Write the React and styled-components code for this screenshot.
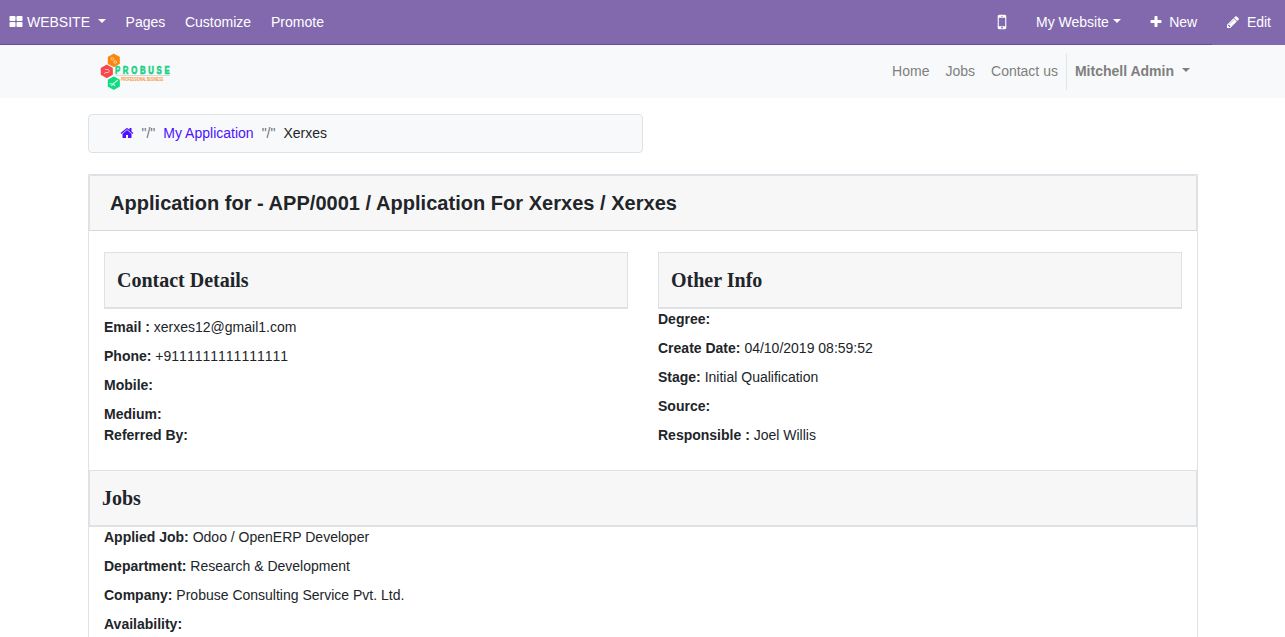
import React from "react";
import styled, { createGlobalStyle } from "styled-components";

const GlobalStyle = createGlobalStyle`
  *, *::before, *::after { box-sizing: border-box; }
  html, body { margin: 0; height: 100%; overflow: hidden; }
  body {
    background: #fff;
    color: #212529;
    font: 14px/21px "Liberation Sans", Arial, sans-serif;
  }
  h3, h4, p { margin: 0; }
`;

const Page = styled.div`
  height: 637px;
  overflow: hidden;
`;

const TopBar = styled.header`
  display: flex;
  justify-content: space-between;
  height: 45px;
  background: #8269ad;
  color: #fff;
`;

const Menu = styled.nav`
  display: flex;
  border-bottom: 1px solid #6c4a9c;
  flex: ${(p) => (p.$grow ? 1 : "none")};
`;

const MenuItem = styled.a`
  display: flex;
  align-items: center;
  height: 44px;
  padding: 0 ${(p) => p.$right ?? 10}px 0 ${(p) => p.$left ?? 10}px;
  gap: ${(p) => p.$gap ?? 0}px;
  white-space: nowrap;
`;

const EditButton = styled(MenuItem)`
  height: 45px;
  padding-bottom: 1px;
  background: #8269ad;
`;

const Caret = styled.span`
  border: 4.2px solid transparent;
  border-top-color: currentColor;
  border-bottom: 0;
  margin-left: ${(p) => p.$gap}px;
  margin-bottom: ${(p) => p.$lift ?? 2}px;
`;

const Glyph = styled.svg`
  display: block;
  flex: none;
  width: ${(p) => p.$size}px;
  height: ${(p) => p.$size}px;
  fill: currentColor;
`;

const LogoImage = styled.svg`
  display: block;
  flex: none;
  width: 80px;
  height: 38px;
  overflow: visible;
`;

const SiteHeader = styled.div`
  height: 53px;
  background: #f8f9fa;
`;

const Container = styled.div`
  width: 1110px;
  margin-left: 88px;
`;

const HeaderRow = styled(Container)`
  display: flex;
  align-items: center;
  justify-content: space-between;
  height: 53px;
  padding-left: 12px;
`;

const SiteNav = styled.nav`
  display: flex;
  align-items: center;
  color: #7f7f80;
`;

const SiteLink = styled.a`
  padding: 0 8px;
  white-space: nowrap;
`;

const UserMenu = styled.a`
  display: flex;
  align-items: center;
  height: 37px;
  padding: 0 8px;
  border-left: 1px solid #e3e5e8;
  font-weight: bold;
`;

const Breadcrumb = styled.div`
  display: flex;
  align-items: center;
  width: 555px;
  height: 39px;
  margin: 16px 0 21px;
  padding-left: 30.5px;
  gap: 8px;
  background: #f8f9fa;
  border: 1px solid #dee2e6;
  border-radius: 4px;
`;

const CrumbLink = styled.a`
  padding-bottom: ${(p) => (p.$icon ? 1 : 0)}px;
  color: #4c12ff;
`;

const Separator = styled.span`
  color: #6c757d;
`;

const Card = styled.main`
  height: 520px;
  border: 1px solid #dee2e6;
`;

const CardHeader = styled.div`
  height: 56px;
  padding: 15px 20px;
  background: #f7f7f7;
  border: 1px solid #dee2e6;
  border-bottom-color: #d5d7da;
  border-radius: 2px 2px 0 0;
`;

const CardTitle = styled.h3`
  font-size: 20px;
  line-height: 24px;
  letter-spacing: 0.027px;
`;

const Columns = styled.div`
  display: grid;
  grid-template-columns: 1fr 1fr;
  gap: 30px;
  height: 239px;
  padding: 21px 15px 0;
`;

const SectionHeader = styled.div`
  height: 57px;
  padding: 15px 12px;
  background: #f7f7f7;
  border: 1px solid #dee2e6;
  border-bottom-width: 2px;
`;

const SectionTitle = styled.h4`
  font: bold 20px/25px "Liberation Serif", "Times New Roman", serif;
`;

const Fields = styled.div`
  padding: ${(p) => p.$top ?? 0}px ${(p) => p.$side ?? 0}px 0;
`;

const Field = styled.p`
  margin-bottom: ${(p) => (p.$tight ? 0 : 8)}px;
  white-space: nowrap;
  font-kerning: ${(p) => (p.$digits ? "none" : "auto")};
`;

const icons = {
  blocks:
    "M832 1024v384q0 52-38 90t-90 38h-512q-52 0-90-38t-38-90v-384q0-52 38-90t90-38h512q52 0 90 38t38 90zm0-768v384q0 52-38 90t-90 38h-512q-52 0-90-38t-38-90v-384q0-52 38-90t90-38h512q52 0 90 38t38 90zm896 768v384q0 52-38 90t-90 38h-512q-52 0-90-38t-38-90v-384q0-52 38-90t90-38h512q52 0 90 38t38 90zm0-768v384q0 52-38 90t-90 38h-512q-52 0-90-38t-38-90v-384q0-52 38-90t90-38h512q52 0 90 38t38 90z",
  plus: "M1600 736v192q0 40-28 68t-68 28h-416v416q0 40-28 68t-68 28h-192q-40 0-68-28t-28-68v-416h-416q-40 0-68-28t-28-68v-192q0-40 28-68t68-28h416v-416q0-40 28-68t68-28h192q40 0 68 28t28 68v416h416q40 0 68 28t28 68z",
  pencil:
    "M491 1536l91-91-235-235-91 91v107h128v128h107zm523-928q0-22-22-22-10 0-17 7l-542 542q-7 7-7 17 0 22 22 22 10 0 17-7l542-542q7-7 7-17zm-54-192l416 416-832 832h-416v-416zm683 96q0 53-37 90l-166 166-416-416 166-165q36-38 90-38 53 0 91 38l235 234q37 39 37 91z",
  home: "M1472 992v480q0 26-19 45t-45 19h-384v-384h-256v384h-384q-26 0-45-19t-19-45v-480q0-1 .5-3t.5-3l575-474 575 474q1 2 1 6zm223-69l-62 74q-8 9-21 11h-3q-13 0-21-7l-692-577-692 577q-12 8-24 7-13-2-21-11l-62-74q-8-10-7-23.5t11-21.5l719-599q32-26 76-26t76 26l244 204v-195q0-14 9-23t23-9h192q14 0 23 9t9 23v408l219 182q10 8 11 21.5t-7 23.5z",
  mobile:
    "M976 1408q0-33-23.5-56.5t-56.5-23.5-56.5 23.5-23.5 56.5 23.5 56.5 56.5 23.5 56.5-23.5 23.5-56.5zm208-160v-704q0-13-9.5-22.5t-22.5-9.5h-512q-13 0-22.5 9.500t-9.500 22.500v704q0 13 9.500 22.500t22.500 9.500h512q13 0 22.500-9.500t9.500-22.500zm-192-848q0-16-16-16h-160q-16 0-16 16t16 16h160q16 0 16-16zm288-16v1024q0 52-38 90t-90 38h-512q-52 0-90-38t-38-90v-1024q0-52 38-90t90-38h512q52 0 90 38t38 90z",
};

const Icon = ({ name, size = 14 }) => (
  <Glyph $size={size} viewBox="0 0 1792 1792">
    <path d={icons[name]} />
  </Glyph>
);

const Logo = () => (
  <LogoImage viewBox="0 0 80 38">
    <g strokeLinejoin="round" strokeWidth="1.2">
      <path d="M13.8 1.2l5.4 3v6.2l-5.4 3-5.4-3V4.2z" fill="#fb860b" stroke="#fb860b" />
      <path d="M6.8 12.2l5.4 3v6.2l-5.4 3-5.4-3v-6.2z" fill="#f8484c" stroke="#f8484c" />
      <path d="M13.8 24l5.4 3v6.2l-5.4 3-5.4-3V27z" fill="#0edc83" stroke="#0edc83" />
    </g>
    <g fill="none" stroke="#fff" strokeWidth=".8" opacity=".75">
      <circle cx="12.4" cy="5.8" r="1.3" />
      <circle cx="15.3" cy="9" r="1.3" />
      <path d="M5 16.500h3.500q1.500 1.500 0 3H6M4 21l2-2" />
      <path d="M9.500 31l4-.5 4.500-3.500M11 32.500l3-1 1 1.500" strokeWidth="1.2" />
    </g>
    <rect x="16" y="22" width="54" height="1" fill="#d5d9dc" />
    <text transform="translate(15 21) scale(.78 1)" textLength="70" lengthAdjust="spacing" fill="#18d184" stroke="#18d184" strokeWidth=".6" fontFamily="Liberation Sans" fontWeight="bold" fontSize="10">
      PROBUSE
    </text>
    <text transform="translate(21 27.600) scale(.72 1)" fill="#fb8f2c" stroke="#fb8f2c" strokeWidth=".15" fontFamily="Liberation Sans" fontSize="4.500">
      PROFESSIONAL BUSINESS
    </text>
  </LogoImage>
);

const contact = [
  { label: "Email :", value: "xerxes12@gmail1.com" },
  { label: "Phone:", value: "+9111111111111111", digits: true },
  { label: "Mobile:" },
  { label: "Medium:", tight: true },
  { label: "Referred By:" },
];
const other = [
  { label: "Degree:" },
  { label: "Create Date:", value: "04/10/2019 08:59:52" },
  { label: "Stage:", value: "Initial Qualification" },
  { label: "Source:" },
  { label: "Responsible :", value: "Joel Willis" },
];
const jobs = [
  { label: "Applied Job:", value: "Odoo / OpenERP Developer" },
  { label: "Department:", value: "Research & Development" },
  { label: "Company:", value: "Probuse Consulting Service Pvt. Ltd." },
  { label: "Availability:" },
];

const FieldList = ({ items, top, side }) => (
  <Fields $top={top} $side={side}>
    {items.map(({ label, value, tight, digits }) => (
      <Field key={label} $tight={tight} $digits={digits}>
        <b>{label}</b> {value}
      </Field>
    ))}
  </Fields>
);

const Section = ({ title }) => (
  <SectionHeader>
    <SectionTitle>{title}</SectionTitle>
  </SectionHeader>
);

export default function App() {
  return (
    <Page>
      <GlobalStyle />
      <TopBar>
        <Menu $grow>
          <MenuItem $left={9.4} $gap={3.6}>
            <Icon name="blocks" />
            <span>WEBSITE</span>
            <Caret $gap={4} />
          </MenuItem>
          <MenuItem>Pages</MenuItem>
          <MenuItem $left={9.6}>Customize</MenuItem>
          <MenuItem>Promote</MenuItem>
        </Menu>
        <Menu>
          <MenuItem $right={14}>
            <Icon name="mobile" size={20} />
          </MenuItem>
          <MenuItem $right={14.7}>
            My Website
            <Caret $gap={3.6} />
          </MenuItem>
          <MenuItem $left={14} $right={14.700} $gap={6}>
            <Icon name="plus" />
            New
          </MenuItem>
        </Menu>
        <EditButton $left={14.3} $right={14} $gap={6.7}>
          <Icon name="pencil" />
          Edit
        </EditButton>
      </TopBar>
      <SiteHeader>
        <HeaderRow>
          <Logo />
          <SiteNav>
            <SiteLink>Home</SiteLink>
            <SiteLink>Jobs</SiteLink>
            <SiteLink>Contact us</SiteLink>
            <UserMenu>
              Mitchell Admin
              <Caret $gap={8} $lift={4} />
            </UserMenu>
          </SiteNav>
        </HeaderRow>
      </SiteHeader>
      <Container>
        <Breadcrumb>
          <CrumbLink $icon>
            <Icon name="home" />
          </CrumbLink>
          <Separator>"/"</Separator>
          <CrumbLink>My Application</CrumbLink>
          <Separator>"/"</Separator>
          <span>Xerxes</span>
        </Breadcrumb>
        <Card>
          <CardHeader>
            <CardTitle>Application for - APP/0001 / Application For Xerxes / Xerxes</CardTitle>
          </CardHeader>
          <Columns>
            <div>
              <Section title="Contact Details" />
              <FieldList items={contact} top={8} />
            </div>
            <div>
              <Section title="Other Info" />
              <FieldList items={other} />
            </div>
          </Columns>
          <Section title="Jobs" />
          <FieldList items={jobs} side={15} />
        </Card>
      </Container>
    </Page>
  );
}
